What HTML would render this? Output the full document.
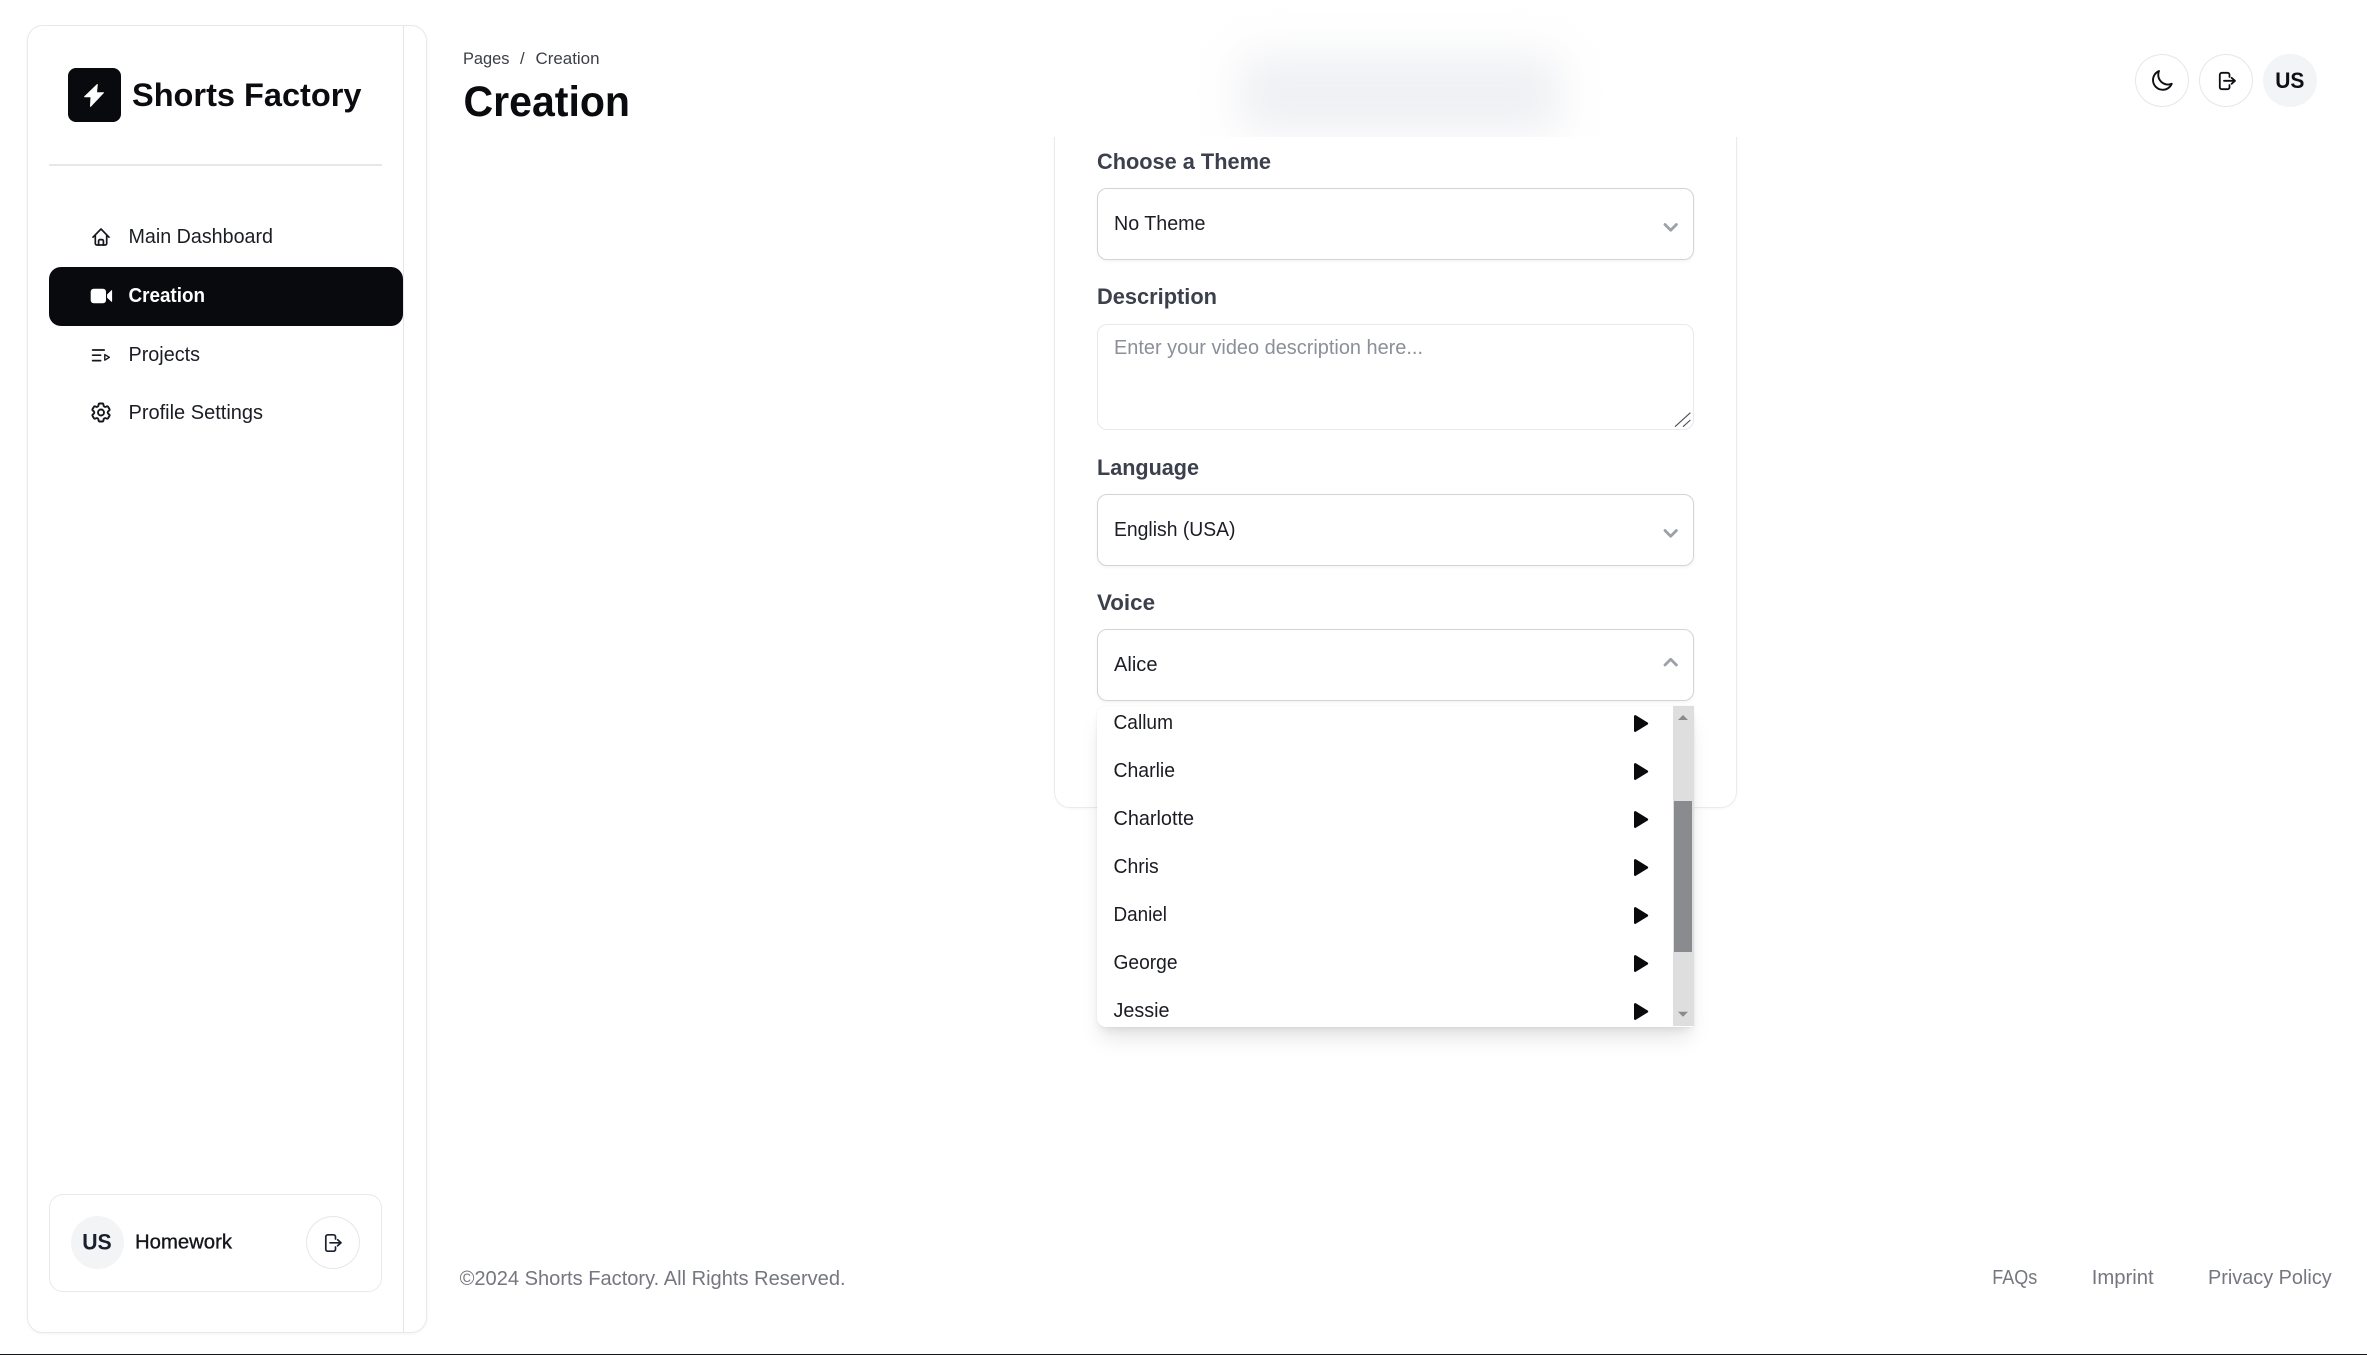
<!DOCTYPE html>
<html lang="en"><head><meta charset="utf-8"><title>Creation</title>
<style>
html,body{margin:0;padding:0;background:#fff}
body{position:relative;width:2367px;height:1355px;overflow:hidden;font-family:"Liberation Sans",sans-serif}
.a{position:absolute;box-sizing:border-box}
svg text{font-family:"Liberation Sans",sans-serif}
</style></head>
<body>
<!-- sidebar -->
<div class="a" style="left:27px;top:25px;width:400px;height:1308px;border:1.5px solid #e8e9eb;border-radius:16px;box-shadow:0 1px 3px rgba(0,0,0,.05)"></div>
<div class="a" style="left:403px;top:26px;width:1px;height:1306px;background:#e4e5e8"></div>
<div class="a" style="left:68px;top:68px;width:53px;height:54px;background:#090a0d;border-radius:8px"></div>
<div class="a" style="left:49px;top:164px;width:333px;height:1.5px;background:#e6e7ea"></div>
<div class="a" style="left:49px;top:267px;width:354px;height:59px;background:#090a0d;border-radius:12px"></div>
<div class="a" style="left:49px;top:1194px;width:333px;height:98px;border:1.5px solid #e8e9eb;border-radius:14px"></div>
<div class="a" style="left:71px;top:1216px;width:53px;height:53px;background:#f2f4f6;border-radius:50%"></div>
<div class="a" style="left:306px;top:1216px;width:54px;height:53px;border:1.5px solid #e6e7ea;border-radius:50%"></div>
<!-- form card -->
<div class="a" style="left:1054px;top:60px;width:683px;height:748px;border:1.5px solid #eaebed;border-radius:16px;box-shadow:0 1px 2px rgba(0,0,0,.03)"></div>
<!-- header, clips the card -->
<div class="a" style="left:440px;top:0;width:1927px;height:137px;background:#fff;overflow:hidden">
  <div class="a" style="left:800px;top:55px;width:320px;height:78px;background:#eff0f3;filter:blur(22px)"></div>
</div>
<div class="a" style="left:2135px;top:54px;width:54px;height:53px;border:1.5px solid #e6e7ea;border-radius:50%"></div>
<div class="a" style="left:2199px;top:54px;width:54px;height:53px;border:1.5px solid #e6e7ea;border-radius:50%"></div>
<div class="a" style="left:2263px;top:54px;width:54px;height:53px;background:#f2f4f6;border-radius:50%"></div>
<!-- fields -->
<div class="a" style="left:1097px;top:188px;width:597px;height:72px;border:1.5px solid #d2d4d9;border-radius:10px;box-shadow:0 1.5px 3px rgba(0,0,0,.05)"></div>
<div class="a" style="left:1097px;top:324px;width:597px;height:106px;border:1.5px solid #e8e9eb;border-radius:10px"></div>
<div class="a" style="left:1097px;top:494px;width:597px;height:72px;border:1.5px solid #d2d4d9;border-radius:10px;box-shadow:0 1.5px 3px rgba(0,0,0,.05)"></div>
<div class="a" style="left:1097px;top:629px;width:597px;height:72px;border:1.5px solid #d2d4d9;border-radius:10px;box-shadow:0 1.5px 3px rgba(0,0,0,.05)"></div>
<!-- dropdown -->
<div class="a" style="left:1097px;top:706px;width:597px;height:321px;background:#fff;border-radius:9px 0 2px 9px;box-shadow:0 15px 22px -4px rgba(0,0,0,.10),0 6px 9px -3px rgba(0,0,0,.07),0 0 2px rgba(0,0,0,.07)"></div>
<div class="a" style="left:1672.5px;top:706px;width:21.5px;height:320px;background:#dedede"></div>
<div class="a" style="left:1674px;top:801px;width:18px;height:151px;background:#8a8b8e"></div>
<div class="a" style="left:0;top:1353.6px;width:2367px;height:1.4px;background:#15161a"></div>

<svg class="a" style="left:0;top:0;filter:blur(.3px)" width="2367" height="1355" viewBox="0 0 2367 1355" xmlns="http://www.w3.org/2000/svg">
<!-- logo -->
<path d="M97.3 84.5 84.6 96.7h6.4l-.5 9.7 13-13.7h-7z" fill="#fff" stroke="#fff" stroke-width="1" stroke-linejoin="round"/>
<text x="132" y="106" font-size="32.5" font-weight="700" fill="#0b0c10" textLength="229.5" lengthAdjust="spacingAndGlyphs">Shorts Factory</text>

<!-- nav -->
<g fill="none" stroke="#15171d" stroke-width="1.7" stroke-linecap="round" stroke-linejoin="round">
<path d="M93 237.2 101 229l8 8.2"/>
<path d="M95.3 235.2v8.3a1.5 1.5 0 0 0 1.5 1.5h8.4a1.5 1.5 0 0 0 1.5-1.5v-8.3"/>
<path d="M98.6 245v-4a1.4 1.4 0 0 1 1.4-1.4h2a1.4 1.4 0 0 1 1.4 1.4v4"/>
<path d="M92.6 350h11.6M92.6 355.2h8M92.6 360.6h8"/>
<path d="M104.8 354.6 109.4 357.3l-4.6 2.8z" stroke-width="1.4"/>
<g transform="translate(89 400.5)"><path stroke-width="1.9" d="M9.594 3.94c.09-.542.56-.94 1.11-.94h2.593c.55 0 1.02.398 1.11.94l.213 1.281c.063.374.313.686.645.87.074.04.147.083.22.127.325.196.72.257 1.075.124l1.217-.456a1.125 1.125 0 0 1 1.37.49l1.296 2.247a1.125 1.125 0 0 1-.26 1.431l-1.003.827c-.293.241-.438.613-.43.992a7.723 7.723 0 0 1 0 .255c-.008.378.137.75.43.991l1.004.827c.424.35.534.955.26 1.43l-1.298 2.247a1.125 1.125 0 0 1-1.369.491l-1.217-.456c-.355-.133-.75-.072-1.076.124a6.47 6.47 0 0 1-.22.128c-.331.183-.581.495-.644.869l-.213 1.281c-.09.543-.56.94-1.11.94h-2.594c-.55 0-1.019-.398-1.11-.94l-.213-1.281c-.062-.374-.312-.686-.644-.87a6.52 6.52 0 0 1-.22-.127c-.325-.196-.72-.257-1.076-.124l-1.217.456a1.125 1.125 0 0 1-1.369-.49l-1.297-2.247a1.125 1.125 0 0 1 .26-1.431l1.004-.827c.292-.24.437-.613.43-.991a6.932 6.932 0 0 1 0-.255c.007-.38-.138-.751-.43-.992l-1.004-.827a1.125 1.125 0 0 1-.26-1.43l1.297-2.247a1.125 1.125 0 0 1 1.37-.491l1.216.456c.356.133.751.072 1.076-.124.072-.044.146-.086.22-.128.332-.183.582-.495.644-.869l.214-1.28Z"/><circle cx="12" cy="12" r="3" stroke-width="1.9"/></g>
</g>
<rect x="90.7" y="288.7" width="15.3" height="14.6" rx="3" fill="#fff"/>
<path d="M107.4 294.6 111.8 290.4V301.6L107.4 297.6Z" fill="#fff" stroke="#fff" stroke-width=".6" stroke-linejoin="round"/>
<g font-size="20.5" fill="#1b1d24">
<text x="128.5" y="243" textLength="144.5" lengthAdjust="spacingAndGlyphs">Main Dashboard</text>
<text x="128.5" y="361" textLength="71.5" lengthAdjust="spacingAndGlyphs">Projects</text>
<text x="128.5" y="419" textLength="134.5" lengthAdjust="spacingAndGlyphs">Profile Settings</text>
</g>
<text x="128.5" y="302" font-size="20.5" font-weight="700" fill="#fff" textLength="76.5" lengthAdjust="spacingAndGlyphs">Creation</text>

<!-- sidebar user -->
<text x="82.2" y="1249.5" font-size="22.5" font-weight="700" fill="#1b2030" textLength="29.5" lengthAdjust="spacingAndGlyphs">US</text>
<text x="135" y="1248.5" font-size="20" font-weight="400" stroke="#14161c" stroke-width=".35" fill="#14161c" textLength="97" lengthAdjust="spacingAndGlyphs">Homework</text>
<g transform="translate(325 1234)" fill="none" stroke="#1b2030" stroke-width="1.7" stroke-linecap="round" stroke-linejoin="round"><path d="M10.5 5V2.8a2 2 0 0 0-2-2H2.8a2 2 0 0 0-2 2v12.4a2 2 0 0 0 2 2h5.700a2 2 0 0 0 2-2V13"/><path d="M5 8.800H15.600M12.600 5.800l3.400 3-3.400 3"/></g>

<!-- header -->
<g font-size="16.800" fill="#3c3f47">
<text x="463" y="64" textLength="46.500" lengthAdjust="spacingAndGlyphs">Pages</text>
<text x="520" y="64">/</text>
<text x="535.500" y="64" textLength="64" lengthAdjust="spacingAndGlyphs">Creation</text>
</g>
<text x="463.500" y="116" font-size="42.500" font-weight="700" fill="#0a0b0e" textLength="166.500" lengthAdjust="spacingAndGlyphs">Creation</text>
<g transform="translate(2150 68.800)" fill="none" stroke="#0e0f13" stroke-width="1.900" stroke-linecap="round" stroke-linejoin="round"><path d="M21.752 15.002A9.72 9.72 0 0 1 18 15.750c-5.385 0-9.750-4.365-9.750-9.750 0-1.330.266-2.597.748-3.752A9.753 9.753 0 0 0 3 11.250C3 16.635 7.365 21 12.750 21a9.753 9.753 0 0 0 9.002-5.998Z"/></g>
<g transform="translate(2219 72)" fill="none" stroke="#0e0f13" stroke-width="1.800" stroke-linecap="round" stroke-linejoin="round"><path d="M10.500 5V2.800a2 2 0 0 0-2-2H2.800a2 2 0 0 0-2 2v12.400a2 2 0 0 0 2 2h5.700a2 2 0 0 0 2-2V13"/><path d="M5 8.800H15.600M12.600 5.800l3.400 3-3.400 3"/></g>
<text x="2275.200" y="88" font-size="22.500" font-weight="700" fill="#0e0f13" textLength="29.200" lengthAdjust="spacingAndGlyphs">US</text>

<!-- labels -->
<g font-size="22" font-weight="700" fill="#3b404c">
<text x="1097" y="169" textLength="174" lengthAdjust="spacingAndGlyphs">Choose a Theme</text>
<text x="1097" y="304" textLength="120" lengthAdjust="spacingAndGlyphs">Description</text>
<text x="1097" y="475" textLength="102" lengthAdjust="spacingAndGlyphs">Language</text>
<text x="1097" y="610" textLength="58" lengthAdjust="spacingAndGlyphs">Voice</text>
</g>
<g font-size="20.500" fill="#1c1e26">
<text x="1114" y="230" textLength="91.500" lengthAdjust="spacingAndGlyphs">No Theme</text>
<text x="1114" y="536" textLength="121.500" lengthAdjust="spacingAndGlyphs">English (USA)</text>
<text x="1114" y="671" textLength="43.500" lengthAdjust="spacingAndGlyphs">Alice</text>
</g>
<text x="1114" y="354" font-size="20.500" fill="#8b8f98" textLength="309" lengthAdjust="spacingAndGlyphs">Enter your video description here...</text>
<g fill="none" stroke="#9ca0a8" stroke-width="2.800" stroke-linecap="round" stroke-linejoin="round">
<path d="M1665 224.500l5.700 5.700 5.700-5.700"/>
<path d="M1665 530.500l5.700 5.700 5.700-5.700"/>
<path d="M1665 665l5.700-5.700 5.700 5.700"/>
</g>
<path d="M1675 426.700 1690.400 412.700M1683 426.700 1690.400 420" stroke="#4b4f57" stroke-width="1.100" fill="none"/>

<!-- dropdown items -->
<g font-size="20.500" fill="#1a1c23">
<text x="1113.500" y="729" textLength="59.500" lengthAdjust="spacingAndGlyphs">Callum</text>
<text x="1113.500" y="777" textLength="61.500" lengthAdjust="spacingAndGlyphs">Charlie</text>
<text x="1113.500" y="825" textLength="80.500" lengthAdjust="spacingAndGlyphs">Charlotte</text>
<text x="1113.500" y="873" textLength="45.200" lengthAdjust="spacingAndGlyphs">Chris</text>
<text x="1113.500" y="921" textLength="53.500" lengthAdjust="spacingAndGlyphs">Daniel</text>
<text x="1113.500" y="969" textLength="64" lengthAdjust="spacingAndGlyphs">George</text>
<text x="1113.500" y="1017" textLength="56" lengthAdjust="spacingAndGlyphs">Jessie</text>
</g>
<g fill="#0a0a0c" stroke="#0a0a0c" stroke-width="2.400" stroke-linejoin="round">
<path d="M1635.200 716.300 1647 723.500 1635.200 730.700Z"/>
<path d="M1635.200 764.300 1647 771.500 1635.200 778.700Z"/>
<path d="M1635.200 812.300 1647 819.500 1635.200 826.700Z"/>
<path d="M1635.200 860.300 1647 867.500 1635.200 874.700Z"/>
<path d="M1635.200 908.300 1647 915.500 1635.200 922.700Z"/>
<path d="M1635.200 956.300 1647 963.500 1635.200 970.700Z"/>
<path d="M1635.200 1004.300 1647 1011.500 1635.200 1018.700Z"/>
</g>
<path d="M1678 720 1683 715 1688 720Z" fill="#8a8a8c"/>
<path d="M1678 1011.700 1683 1016.700 1688 1011.700Z" fill="#8a8a8c"/>

<!-- footer -->
<g font-size="20.500" fill="#74777f">
<text x="459.600" y="1285" textLength="386" lengthAdjust="spacingAndGlyphs">©2024 Shorts Factory. All Rights Reserved.</text>
<text x="1992.300" y="1284" textLength="45" lengthAdjust="spacingAndGlyphs">FAQs</text>
<text x="2091.700" y="1284" textLength="62" lengthAdjust="spacingAndGlyphs">Imprint</text>
<text x="2208" y="1284" textLength="123.700" lengthAdjust="spacingAndGlyphs">Privacy Policy</text>
</g>
</svg>
</body></html>
